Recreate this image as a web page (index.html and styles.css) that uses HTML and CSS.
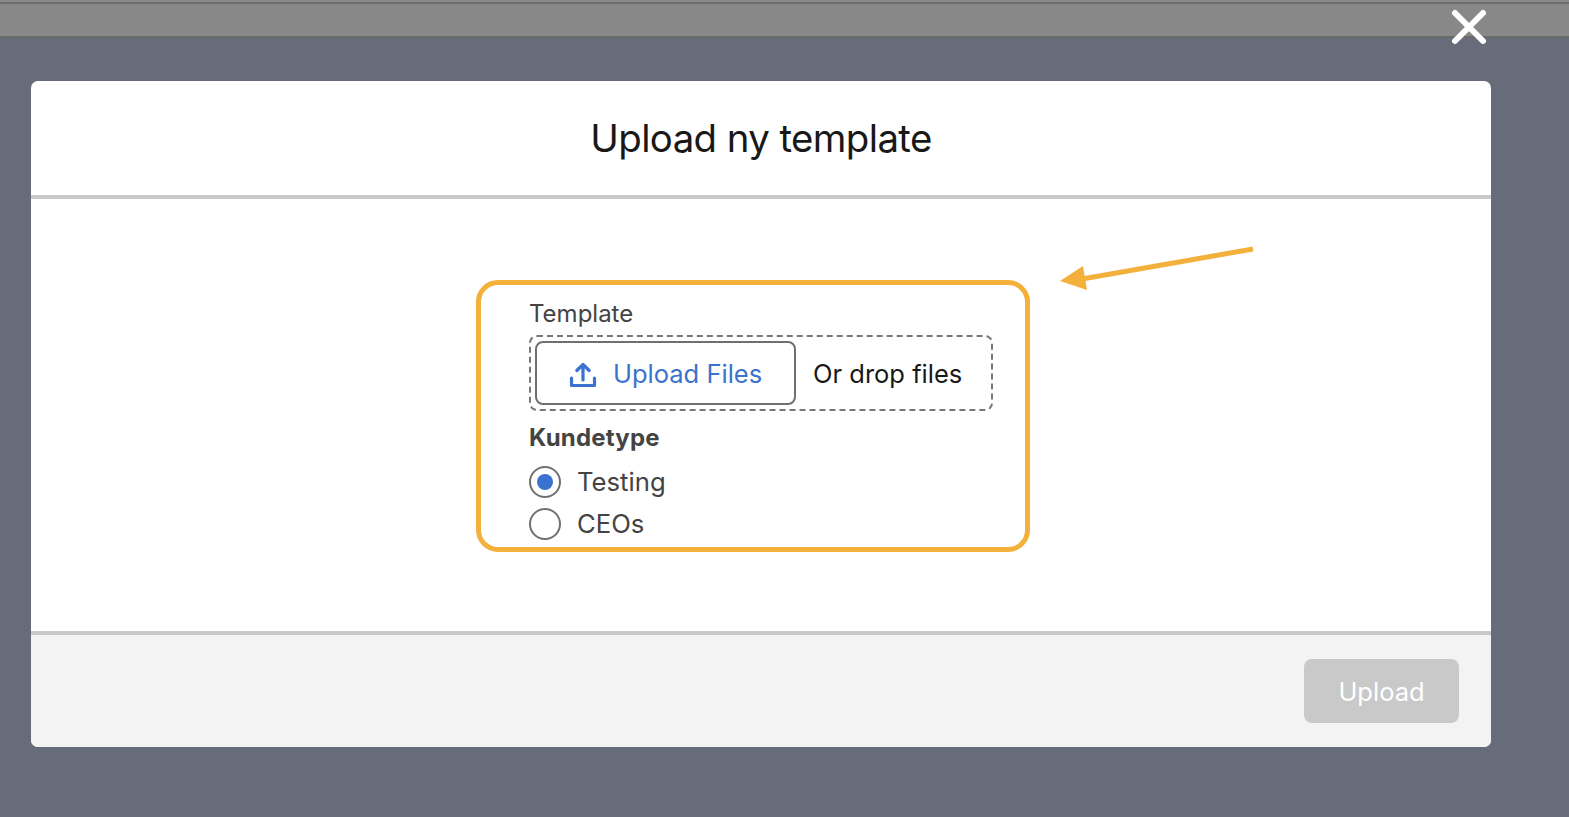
FILE: index.html
```html
<!DOCTYPE html>
<html lang="da">
<head>
<meta charset="utf-8">
<title>Upload ny template</title>
<link rel="stylesheet" href="styles.css">
</head>
<body>
<div class="topbar"></div>
<svg class="close" width="38" height="38" viewBox="0 0 38 38" aria-hidden="true"><path d="M5 5L33 33M33 5L5 33" stroke="#fff" stroke-width="6" stroke-linecap="round"/></svg>
<main class="modal">
  <header class="modal-head"><h1 class="title">Upload ny template</h1></header>
  <section class="modal-body">
    <div class="callout">
      <div class="field-label">Template</div>
      <div class="dropzone">
        <button class="upload-btn" type="button">
          <svg class="upload-icon" width="28" height="28" viewBox="0 0 28 28" aria-hidden="true"><path d="M14 3.5V19M7.8 9.5L14 3.5L20.2 9.5M2.5 17V24.5H25.5V17" fill="none" stroke="#3a72cf" stroke-width="3.2" stroke-linecap="round" stroke-linejoin="round"/></svg>
          <span>Upload Files</span>
        </button>
        <span class="drop-text">Or drop files</span>
      </div>
      <div class="group-label">Kundetype</div>
      <label class="radio-row first"><span class="radio checked"></span><span class="radio-text">Testing</span></label>
      <label class="radio-row"><span class="radio"></span><span class="radio-text">CEOs</span></label>
    </div>
    <svg class="arrow" width="200" height="50" viewBox="0 0 200 50" aria-hidden="true"><path d="M193 4L22 34" stroke="#f3b03a" stroke-width="5"/><path d="M0 36L23 21L27 45Z" fill="#f3b03a"/></svg>
  </section>
  <footer class="modal-foot"><button class="submit" type="button">Upload</button></footer>
</main>
</body>
</html>
```
FILE: styles.css
```css
* { box-sizing: border-box; }
html, body { margin: 0; height: 100%; }
body {
  position: relative;
  background: #666c79;
  font-family: Inter, "Liberation Sans", sans-serif;
  overflow: hidden;
  color: #444;
}
.topbar {
  height: 38px;
  background: linear-gradient(#888 2px, #6d6d6d 2px, #6d6d6d 4px, #888 4px);
  border-bottom: 2px solid #6a6a6a;
}
.close { position: absolute; left: 1450px; top: 8px; }
.modal {
  width: 1460px;
  margin: 43px 0 0 31px;
  background: #fff;
  border-radius: 7px;
  overflow: hidden;
}
.modal-head {
  height: 118px;
  border-bottom: 4px solid #c9c9c9;
  display: flex;
  align-items: center;
  justify-content: center;
}
.title {
  margin: 0;
  font-size: 38.4px;
  font-weight: 400;
  letter-spacing: -0.6px;
  color: #181818;
}
.modal-body {
  position: relative;
  height: 432px;
  padding: 81px 0 0 445px;
}
.callout {
  width: 554px;
  height: 272px;
  border: 5px solid #f3b03a;
  border-radius: 22px;
  padding: 14px 0 0 48px;
}
.field-label { font-size: 24px; line-height: 30px; }
.dropzone {
  width: 464px;
  height: 76px;
  margin-top: 6px;
  border: 2px dashed #777;
  border-radius: 8px;
  padding: 4px;
  display: flex;
  align-items: center;
}
.upload-btn {
  width: 261px;
  height: 64px;
  padding: 0 0 0 32px;
  border: 2px solid #707070;
  border-radius: 8px;
  background: #fff;
  display: flex;
  align-items: center;
  gap: 16px;
  font: inherit;
  font-size: 25.5px;
  color: #3a72cf;
}
.upload-icon { margin-top: 4px; }
.drop-text { margin-left: 17px; font-size: 25.5px; color: #181818; }
.group-label { margin-top: 12px; font-size: 24px; line-height: 30px; font-weight: 700; letter-spacing: 0.2px; }
.radio-row {
  display: flex;
  align-items: center;
  gap: 16px;
  height: 42px;
  font-size: 25.7px;
}
.radio-row.first { margin-top: 8px; }
.radio-text { margin-top: -1px; }
.radio {
  width: 32px;
  height: 32px;
  border: 2px solid #707070;
  border-radius: 50%;
  display: flex;
  align-items: center;
  justify-content: center;
}
.radio.checked::after {
  content: "";
  width: 16px;
  height: 16px;
  border-radius: 50%;
  background: #3a72cf;
}
.arrow { position: absolute; left: 1029px; top: 46px; }
.modal-foot {
  height: 116px;
  background: #f3f3f3;
  border-top: 4px solid #c9c9c9;
  padding: 24px 32px 0 0;
  display: flex;
  justify-content: flex-end;
  align-items: flex-start;
}
.submit {
  width: 155px;
  height: 64px;
  border: 0;
  border-radius: 8px;
  background: #c9c9c9;
  color: #fff;
  font: inherit;
  font-size: 25.5px;
}
```
